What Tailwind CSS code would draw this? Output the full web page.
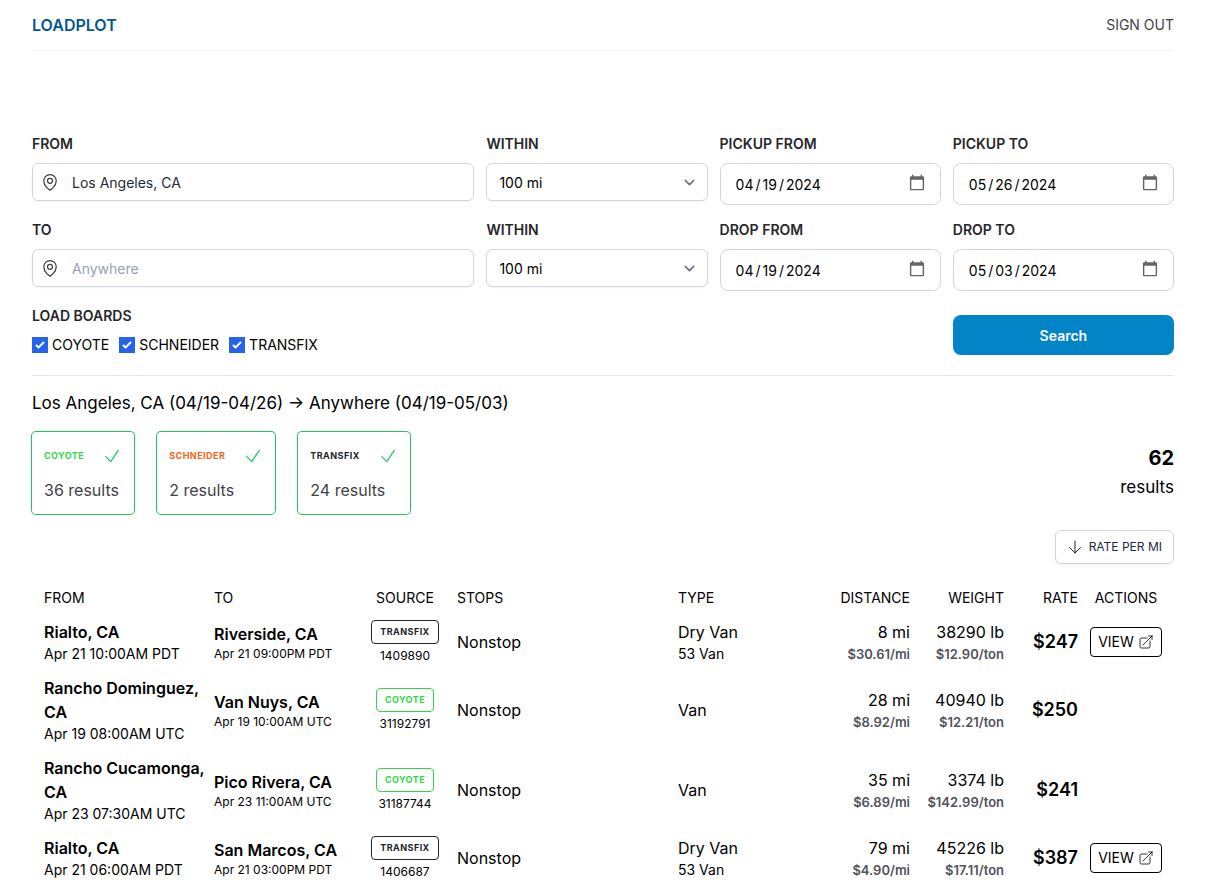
<!DOCTYPE html>
<html lang="en">
<head>
<meta charset="utf-8">
<meta name="viewport" content="width=device-width, initial-scale=1">
<title>Loadplot</title>
<script src="https://cdn.jsdelivr.net/npm/@tailwindcss/browser@4"></script>
</head>
<body class="bg-white px-8 text-base text-black font-[Inter,sans-serif] overflow-x-hidden">
<svg class="hidden" aria-hidden="true">
  <symbol id="pin" viewBox="0 0 24 24" fill="none" stroke="currentColor" stroke-width="1.5" stroke-linecap="round" stroke-linejoin="round"><path d="M15 10.5a3 3 0 1 1-6 0 3 3 0 0 1 6 0Z"/><path d="M19.5 10.5c0 7.142-7.5 11.25-7.5 11.25S4.5 17.642 4.5 10.5a7.5 7.5 0 1 1 15 0Z"/></symbol>
  <symbol id="tick" viewBox="0 0 24 24" fill="none" stroke="currentColor" stroke-width="1.5" stroke-linecap="round" stroke-linejoin="round"><path d="m4.5 12.75 6 6 9-13.5"/></symbol>
  <symbol id="boxtick" viewBox="0 0 16 16" fill="currentColor"><path d="M12.207 4.793a1 1 0 010 1.414l-5 5a1 1 0 01-1.414 0l-2-2a1 1 0 011.414-1.414L6.5 9.086l4.293-4.293a1 1 0 011.414 0z"/></symbol>
  <symbol id="chevron" viewBox="0 0 20 20" fill="none" stroke="currentColor" stroke-width="1.5" stroke-linecap="round" stroke-linejoin="round"><path d="M6 8l4 4 4-4"/></symbol>
  <symbol id="external" viewBox="0 0 24 24" fill="none" stroke="currentColor" stroke-width="1.2" stroke-linecap="round" stroke-linejoin="round"><path d="M13.5 6H5.25A2.25 2.25 0 0 0 3 8.25v10.5A2.25 2.25 0 0 0 5.25 21h10.5A2.25 2.25 0 0 0 18 18.75V10.5m-10.5 6L21 3m0 0h-5.25M21 3v5.25"/></symbol>
</svg>

<header class="flex h-[51px] items-center justify-between border-b border-zinc-100">
  <a href="#" class="font-semibold text-sky-800">LOADPLOT</a>
  <a href="#" class="text-sm text-zinc-700">SIGN OUT</a>
</header>

<main>
  <form class="mt-[82px] grid grid-cols-[2fr_1fr_1fr_1fr] gap-x-3 gap-y-3.5 border-b border-zinc-200 pb-5 text-sm">
    <div class="min-w-0">
      <label for="from" class="mb-2 block font-semibold leading-[22px] text-zinc-800">FROM</label>
      <div class="grid">
        <input id="from" type="text" value="Los Angeles, CA" placeholder="Anywhere" class="col-start-1 row-start-1 h-[38px] w-full rounded-md border border-gray-300 pl-[39px] pr-3 text-slate-800 shadow-xs placeholder:text-gray-400">
        <svg class="pointer-events-none col-start-1 row-start-1 ml-2 size-5 self-center text-zinc-700"><use href="#pin"/></svg>
      </div>
    </div>
    <div class="min-w-0">
      <label for="from-within" class="mb-2 block font-semibold leading-[22px] text-zinc-800">WITHIN</label>
      <div class="grid">
        <select id="from-within" class="col-start-1 row-start-1 h-[38px] w-full appearance-none rounded-md border border-gray-300 px-3 pt-0.5 shadow-xs"><option>100 mi</option></select>
        <svg class="pointer-events-none col-start-1 row-start-1 mr-2 size-[21px] self-center justify-self-end text-gray-500"><use href="#chevron"/></svg>
      </div>
    </div>
    <div class="min-w-0">
      <label for="pickup-from" class="mb-2 block font-semibold leading-[22px] text-zinc-800">PICKUP FROM</label>
      <input id="pickup-from" type="date" value="2024-04-19" class="h-[42px] w-full rounded-lg border border-zinc-300 pt-0.5 pr-3 pl-3.5 [&::-webkit-datetime-edit-text]:px-px [&::-webkit-calendar-picker-indicator]:mb-1 [&::-webkit-calendar-picker-indicator]:size-[18px] [&::-webkit-calendar-picker-indicator]:opacity-60">
    </div>
    <div class="min-w-0">
      <label for="pickup-to" class="mb-2 block font-semibold leading-[22px] text-zinc-800">PICKUP TO</label>
      <input id="pickup-to" type="date" value="2024-05-26" class="h-[42px] w-full rounded-lg border border-zinc-300 pt-0.5 pr-3 pl-3.5 [&::-webkit-datetime-edit-text]:px-px [&::-webkit-calendar-picker-indicator]:mb-1 [&::-webkit-calendar-picker-indicator]:size-[18px] [&::-webkit-calendar-picker-indicator]:opacity-60">
    </div>

    <div class="min-w-0">
      <label for="to" class="mb-2 block font-semibold leading-[22px] text-zinc-800">TO</label>
      <div class="grid">
        <input id="to" type="text" placeholder="Anywhere" class="col-start-1 row-start-1 h-[38px] w-full rounded-md border border-gray-300 pl-[39px] pr-3 text-slate-800 shadow-xs placeholder:text-gray-400">
        <svg class="pointer-events-none col-start-1 row-start-1 ml-2 size-5 self-center text-zinc-700"><use href="#pin"/></svg>
      </div>
    </div>
    <div class="min-w-0">
      <label for="to-within" class="mb-2 block font-semibold leading-[22px] text-zinc-800">WITHIN</label>
      <div class="grid">
        <select id="to-within" class="col-start-1 row-start-1 h-[38px] w-full appearance-none rounded-md border border-gray-300 px-3 pt-0.5 shadow-xs"><option>100 mi</option></select>
        <svg class="pointer-events-none col-start-1 row-start-1 mr-2 size-[21px] self-center justify-self-end text-gray-500"><use href="#chevron"/></svg>
      </div>
    </div>
    <div class="min-w-0">
      <label for="drop-from" class="mb-2 block font-semibold leading-[22px] text-zinc-800">DROP FROM</label>
      <input id="drop-from" type="date" value="2024-04-19" class="h-[42px] w-full rounded-lg border border-zinc-300 pt-0.5 pr-3 pl-3.5 [&::-webkit-datetime-edit-text]:px-px [&::-webkit-calendar-picker-indicator]:mb-1 [&::-webkit-calendar-picker-indicator]:size-[18px] [&::-webkit-calendar-picker-indicator]:opacity-60">
    </div>
    <div class="min-w-0">
      <label for="drop-to" class="mb-2 block font-semibold leading-[22px] text-zinc-800">DROP TO</label>
      <input id="drop-to" type="date" value="2024-05-03" class="h-[42px] w-full rounded-lg border border-zinc-300 pt-0.5 pr-3 pl-3.5 [&::-webkit-datetime-edit-text]:px-px [&::-webkit-calendar-picker-indicator]:mb-1 [&::-webkit-calendar-picker-indicator]:size-[18px] [&::-webkit-calendar-picker-indicator]:opacity-60">
    </div>

    <fieldset class="col-span-3">
      <legend class="mb-2 font-semibold leading-[22px] text-zinc-800">LOAD BOARDS</legend>
      <div class="flex gap-2.5">
        <label class="flex items-center gap-1"><span class="grid size-4"><input type="checkbox" checked class="col-start-1 row-start-1 size-4 appearance-none border border-gray-500 checked:border-[#2563eb] checked:bg-[#2563eb]"><svg class="pointer-events-none col-start-1 row-start-1 size-4 text-white"><use href="#boxtick"/></svg></span>COYOTE</label>
        <label class="flex items-center gap-1"><span class="grid size-4"><input type="checkbox" checked class="col-start-1 row-start-1 size-4 appearance-none border border-gray-500 checked:border-[#2563eb] checked:bg-[#2563eb]"><svg class="pointer-events-none col-start-1 row-start-1 size-4 text-white"><use href="#boxtick"/></svg></span>SCHNEIDER</label>
        <label class="flex items-center gap-1"><span class="grid size-4"><input type="checkbox" checked class="col-start-1 row-start-1 size-4 appearance-none border border-gray-500 checked:border-[#2563eb] checked:bg-[#2563eb]"><svg class="pointer-events-none col-start-1 row-start-1 size-4 text-white"><use href="#boxtick"/></svg></span>TRANSFIX</label>
      </div>
    </fieldset>
    <button type="submit" class="h-10 self-end rounded-lg bg-[#0284c7] pt-0.5 font-semibold text-white">Search</button>
  </form>

  <h1 class="mt-[13px] text-[17px] leading-7">Los Angeles, CA (04/19-04/26) → Anywhere (04/19-05/03)</h1>

  <div class="mt-[15px] flex items-center justify-between">
    <div class="flex gap-[23px]">
      <section class="flex flex-col gap-2.5 rounded-sm p-3 ring-1 ring-[#22c55e]">
        <div class="flex h-6 items-center justify-between gap-[18px]"><h2 class="text-[9px] font-bold tracking-wider text-[#32d74b]">COYOTE</h2><svg class="size-5 text-[#22c55e]"><use href="#tick"/></svg></div>
        <p class="text-zinc-700">36 results</p>
      </section>
      <section class="flex flex-col gap-2.5 rounded-sm p-3 ring-1 ring-[#22c55e]">
        <div class="flex h-6 items-center justify-between gap-[18px]"><h2 class="text-[9px] font-bold tracking-wider text-[#f96316]">SCHNEIDER</h2><svg class="size-5 text-[#22c55e]"><use href="#tick"/></svg></div>
        <p class="text-zinc-700">2 results</p>
      </section>
      <section class="flex flex-col gap-2.5 rounded-sm p-3 ring-1 ring-[#22c55e]">
        <div class="flex h-6 items-center justify-between gap-[18px]"><h2 class="text-[9px] font-bold tracking-wider text-[#212529]">TRANSFIX</h2><svg class="size-5 text-[#22c55e]"><use href="#tick"/></svg></div>
        <p class="text-zinc-700">24 results</p>
      </section>
    </div>
    <div class="text-right"><p class="text-xl font-bold">62</p><p class="text-[17px] leading-[30px]">results</p></div>
  </div>

  <div class="mt-4 mb-[18px] flex justify-end">
    <button type="button" class="flex h-[34px] items-center gap-1.5 rounded-md border border-gray-300 px-[11px] text-xs text-slate-800 shadow-xs">
      <svg class="size-4" viewBox="0 0 16 16" fill="none" stroke="currentColor" stroke-linecap="round" stroke-linejoin="round"><path d="M8 2v12M2.500 8.500 8 14l5.500-5.500"/></svg>RATE PER MI
    </button>
  </div>

  <table class="w-full table-fixed text-left">
    <colgroup><col class="w-[176px]"><col class="w-[151px]"><col class="w-[92px]"><col><col class="w-[148px]"><col class="w-24"><col class="w-[94px]"><col class="w-[74px]"><col class="w-[90px]"></colgroup>
    <thead class="text-sm">
      <tr>
        <th scope="col" class="py-1.5 pr-1.5 pl-3 font-normal">FROM</th>
        <th scope="col" class="p-1.5 font-normal">TO</th>
        <th scope="col" class="p-1.5 text-center font-normal">SOURCE</th>
        <th scope="col" class="p-1.5 font-normal">STOPS</th>
        <th scope="col" class="p-1.5 font-normal">TYPE</th>
        <th scope="col" class="p-1.5 text-right font-normal">DISTANCE</th>
        <th scope="col" class="p-1.5 text-right font-normal">WEIGHT</th>
        <th scope="col" class="p-1.5 text-right font-normal">RATE</th>
        <th scope="col" class="py-1.5 pr-3 pl-1.5 text-center font-normal">ACTIONS</th>
      </tr>
    </thead>
    <tbody>
      <tr>
        <td class="py-1.5 pl-3"><p class="font-semibold">Rialto, CA</p><p class="text-sm">Apr 21 10:00AM PDT</p></td>
        <td class="p-1.5"><p class="font-semibold">Riverside, CA</p><p class="text-xs">Apr 21 09:00PM PDT</p></td>
        <td class="p-1.5"><div class="flex flex-col items-center gap-1 text-xs"><span class="flex h-6 items-center rounded-sm border border-[#212529] px-2 text-[9px] font-bold tracking-wider text-[#212529]">TRANSFIX</span>1409890</div></td>
        <td class="p-1.5">Nonstop</td>
        <td class="p-1.5"><p>Dry Van</p><p class="text-sm">53 Van</p></td>
        <td class="p-1.5 text-right"><p>8 mi</p><p class="text-[13px] leading-5 font-semibold text-zinc-600">$30.61/mi</p></td>
        <td class="p-1.5 text-right"><p>38290 lb</p><p class="text-[13px] leading-5 font-semibold text-zinc-600">$12.90/ton</p></td>
        <td class="p-1.5 text-right text-lg font-semibold">$247</td>
        <td class="pr-3 pl-1.5"><a href="#" class="flex h-[30px] items-center justify-center gap-1 rounded-sm border border-black text-sm">VIEW<svg class="size-4"><use href="#external"/></svg></a></td>
      </tr>
      <tr>
        <td class="py-1.5 pl-3"><p class="font-semibold">Rancho Dominguez, CA</p><p class="text-sm">Apr 19 08:00AM UTC</p></td>
        <td class="p-1.5"><p class="font-semibold">Van Nuys, CA</p><p class="text-xs">Apr 19 10:00AM UTC</p></td>
        <td class="p-1.5"><div class="flex flex-col items-center gap-1 text-xs"><span class="flex h-6 items-center rounded-sm border border-[#32d74b] px-2 text-[9px] font-bold tracking-wider text-[#32d74b]">COYOTE</span>31192791</div></td>
        <td class="p-1.5">Nonstop</td>
        <td class="p-1.5">Van</td>
        <td class="p-1.5 text-right"><p>28 mi</p><p class="text-[13px] leading-5 font-semibold text-zinc-600">$8.92/mi</p></td>
        <td class="p-1.5 text-right"><p>40940 lb</p><p class="text-[13px] leading-5 font-semibold text-zinc-600">$12.21/ton</p></td>
        <td class="p-1.5 text-right text-lg font-semibold">$250</td>
        <td></td>
      </tr>
      <tr>
        <td class="py-1.5 pl-3"><p class="font-semibold">Rancho Cucamonga, CA</p><p class="text-sm">Apr 23 07:30AM UTC</p></td>
        <td class="p-1.5"><p class="font-semibold">Pico Rivera, CA</p><p class="text-xs">Apr 23 11:00AM UTC</p></td>
        <td class="p-1.5"><div class="flex flex-col items-center gap-1 text-xs"><span class="flex h-6 items-center rounded-sm border border-[#32d74b] px-2 text-[9px] font-bold tracking-wider text-[#32d74b]">COYOTE</span>31187744</div></td>
        <td class="p-1.5">Nonstop</td>
        <td class="p-1.5">Van</td>
        <td class="p-1.5 text-right"><p>35 mi</p><p class="text-[13px] leading-5 font-semibold text-zinc-600">$6.89/mi</p></td>
        <td class="p-1.5 text-right"><p>3374 lb</p><p class="text-[13px] leading-5 font-semibold text-zinc-600">$142.99/ton</p></td>
        <td class="p-1.5 text-right text-lg font-semibold">$241</td>
        <td></td>
      </tr>
      <tr>
        <td class="py-1.5 pl-3"><p class="font-semibold">Rialto, CA</p><p class="text-sm">Apr 21 06:00AM PDT</p></td>
        <td class="p-1.5"><p class="font-semibold">San Marcos, CA</p><p class="text-xs">Apr 21 03:00PM PDT</p></td>
        <td class="p-1.5"><div class="flex flex-col items-center gap-1 text-xs"><span class="flex h-6 items-center rounded-sm border border-[#212529] px-2 text-[9px] font-bold tracking-wider text-[#212529]">TRANSFIX</span>1406687</div></td>
        <td class="p-1.5">Nonstop</td>
        <td class="p-1.5"><p>Dry Van</p><p class="text-sm">53 Van</p></td>
        <td class="p-1.5 text-right"><p>79 mi</p><p class="text-[13px] leading-5 font-semibold text-zinc-600">$4.90/mi</p></td>
        <td class="p-1.5 text-right"><p>45226 lb</p><p class="text-[13px] leading-5 font-semibold text-zinc-600">$17.11/ton</p></td>
        <td class="p-1.5 text-right text-lg font-semibold">$387</td>
        <td class="pr-3 pl-1.5"><a href="#" class="flex h-[30px] items-center justify-center gap-1 rounded-sm border border-black text-sm">VIEW<svg class="size-4"><use href="#external"/></svg></a></td>
      </tr>
    </tbody>
  </table>
</main>
</body>
</html>
